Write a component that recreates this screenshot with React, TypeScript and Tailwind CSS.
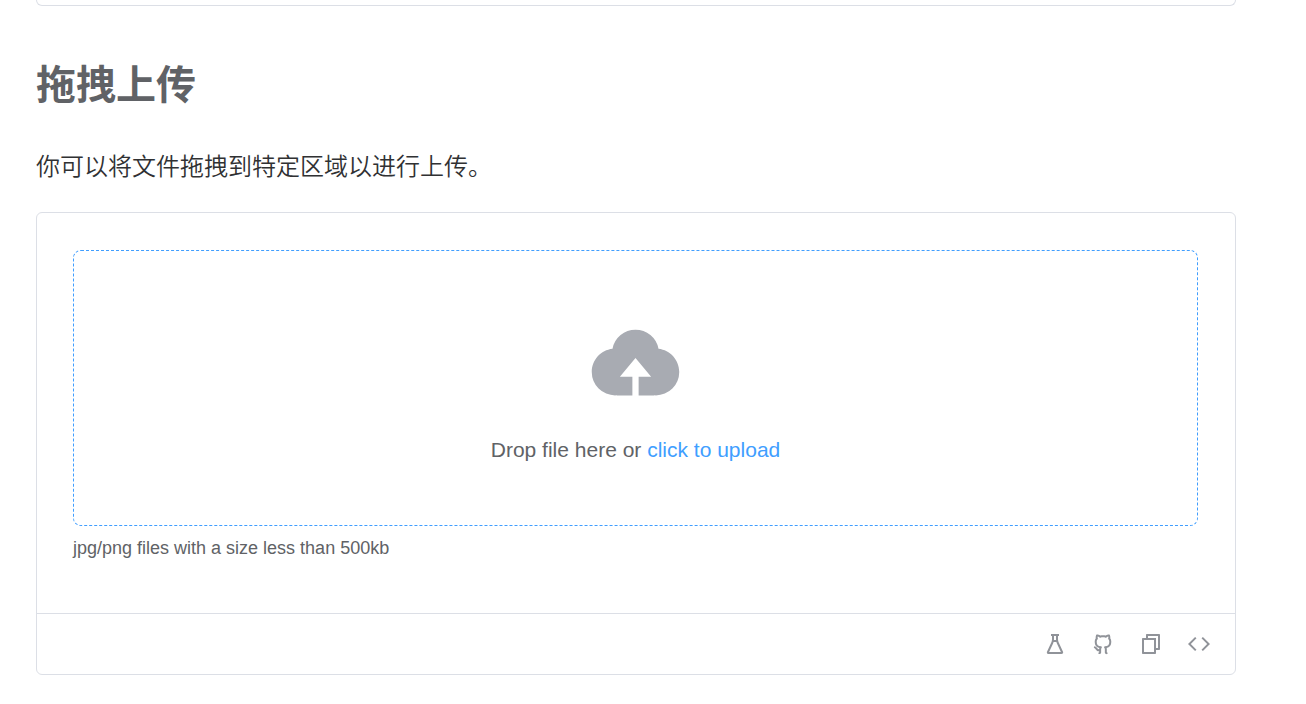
import {
  RiCodeLine,
  RiFileCopyLine,
  RiFlaskLine,
  RiGithubLine,
} from "react-icons/ri";

const actions = [
  { label: "Playground", icon: RiFlaskLine },
  { label: "GitHub", icon: RiGithubLine },
  { label: "Copy code", icon: RiFileCopyLine },
  { label: "View source", icon: RiCodeLine },
];

function UploadCloud() {
  return (
    <svg
      viewBox="0 0 1024 1024"
      className="w-[101px] h-[100px] text-[#a8abb2]"
      fill="currentColor"
      aria-hidden="true"
    >
      <path d="M544 864V672h128L512 480 352 672h128v192H320v-1.6c-5.376.32-10.496 1.6-16 1.6A240 240 0 0 1 64 624c0-123.136 93.12-223.488 212.608-237.248A239.808 239.808 0 0 1 512 192a239.872 239.872 0 0 1 235.456 194.752c119.488 13.76 212.48 114.112 212.48 237.248a240 240 0 0 1-240 240c-5.376 0-10.56-1.28-16-1.6v1.6z" />
    </svg>
  );
}

export default function App() {
  return (
    <main className="min-h-screen bg-white pl-9 pr-[70px] font-['Liberation_Sans','Noto_Sans_CJK_SC',sans-serif]">
      {/* End of the previous demo */}
      <div className="h-1.5 rounded-b-md border border-t-0 border-[#dcdfe6]" />

      <h2 className="mt-[49px] text-[40px] leading-[60px] font-bold text-[#606266]">
        拖拽上传
      </h2>
      <p className="mt-8 text-2xl leading-10 font-[350] text-[#303133]">
        你可以将文件拖拽到特定区域以进行上传。
      </p>

      <section className="mt-[25px] rounded-md border border-[#dcdfe6]">
        <div className="pl-9 pr-[37px] pt-[37px] pb-[50px]">
          <label
            htmlFor="file"
            className="flex flex-col items-center rounded-lg border border-dashed border-[#409eff] py-[60px] cursor-pointer"
          >
            <UploadCloud />
            <span className="mt-6 text-[21px] leading-[30px] text-[#606266]">
              Drop file here or{" "}
              <em className="not-italic text-[#409eff]">click to upload</em>
            </span>
            <input id="file" type="file" multiple className="sr-only" />
          </label>
          <p className="mt-[7px] text-lg leading-[30px] text-[#606266]">
            jpg/png files with a size less than 500kb
          </p>
        </div>

        <div className="flex h-[61px] items-center justify-end gap-6 border-t border-[#dcdfe6] px-6">
          {actions.map(({ label, icon: Icon }) => (
            <button
              key={label}
              type="button"
              aria-label={label}
              className="text-[#909399] hover:text-[#409eff] cursor-pointer"
            >
              <Icon size={24} />
            </button>
          ))}
        </div>
      </section>
    </main>
  );
}
